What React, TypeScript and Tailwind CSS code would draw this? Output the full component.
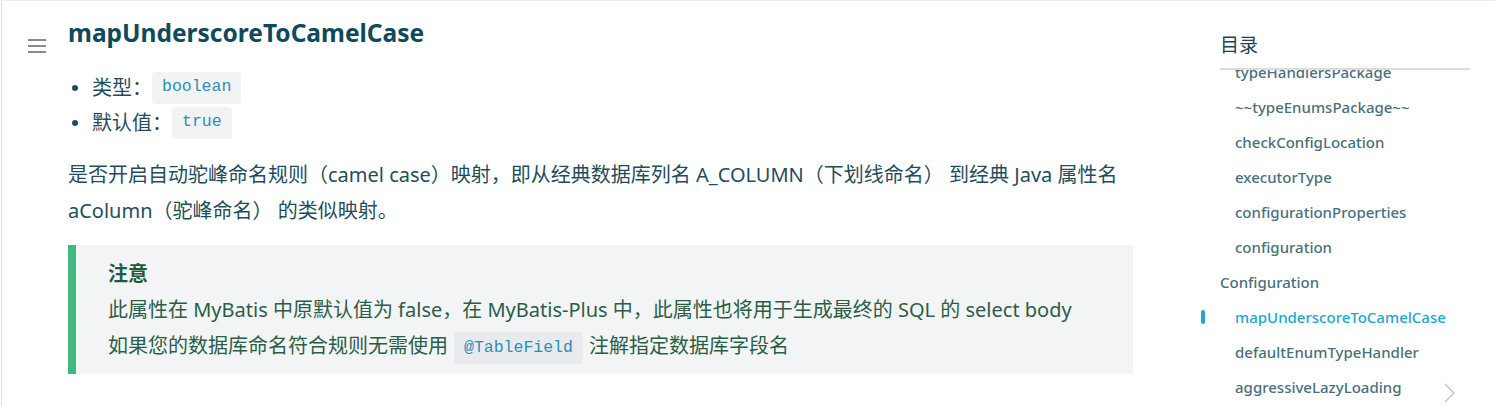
import React from "react";

const tocItems = [
  { label: "typeHandlersPackage", level: 2 },
  { label: "~~typeEnumsPackage~~", level: 2 },
  { label: "checkConfigLocation", level: 2 },
  { label: "executorType", level: 2 },
  { label: "configurationProperties", level: 2 },
  { label: "configuration", level: 2 },
  { label: "Configuration", level: 1 },
  { label: "mapUnderscoreToCamelCase", level: 2, active: true },
  { label: "defaultEnumTypeHandler", level: 2 },
  { label: "aggressiveLazyLoading", level: 2 },
];

const Code: React.FC<{ children: React.ReactNode; dark?: boolean }> = ({
  children,
  dark,
}) => (
  <code
    className={`inline-flex h-[32px] items-center rounded-[4px] px-[10px] text-[16.5px] text-[#2a8fba] font-['Liberation_Mono',monospace] ${
      dark ? "bg-[#e8eaed]" : "bg-[#f2f3f4]"
    }`}
  >
    {children}
  </code>
);

export default function App() {
  return (
    <div className="relative flex h-[406px] w-full overflow-hidden border-t border-[#eee] bg-white font-['Noto_Sans','Noto_Sans_CJK_SC',sans-serif] text-[#1f4d5c]">
      <div className="ml-px w-px shrink-0 bg-[#ddd]" />

      {/* sidebar toggle */}
      <div className="w-[66px] shrink-0 pl-[26px] pt-[38px]">
        <div className="flex w-[18px] flex-col gap-[4px]">
          <span className="h-[2px] bg-[#8a8a8a]" />
          <span className="h-[2px] bg-[#8a8a8a]" />
          <span className="h-[2px] bg-[#8a8a8a]" />
        </div>
      </div>

      {/* main content */}
      <main className="w-[1065px] shrink-0 pt-[16px]">
        <h1 className="text-[24.5px] font-bold leading-[32px] text-[#0f4a5b]">
          mapUnderscoreToCamelCase
        </h1>

        <ul className="mt-[21px] pl-[24px]">
          <li className="relative flex h-[35px] items-center text-[20px]">
            <span className="absolute left-[-20px] top-[15px] h-[6px] w-[6px] rounded-full bg-[#1f4d5c]" />
            <span>类型：</span>
            <Code>boolean</Code>
          </li>
          <li className="relative flex h-[35px] items-center text-[20px]">
            <span className="absolute left-[-20px] top-[15px] h-[6px] w-[6px] rounded-full bg-[#1f4d5c]" />
            <span>默认值：</span>
            <Code>true</Code>
          </li>
        </ul>

        <p className="mt-[17px] whitespace-nowrap text-[20px] leading-[36px]">
          是否开启自动驼峰命名规则（camel case）映射，即从经典数据库列名 A_COLUMN（下划线命名） 到经典 Java 属性名
          <br />
          aColumn（驼峰命名） 的类似映射。
        </p>

        <div className="mt-[16px] flex border-l-[8px] border-[#42b883] bg-[#f3f4f5] pb-[10px] pl-[32px] pt-[16px] text-[#2b5e47]">
          <div>
            <p className="text-[20px] font-bold leading-[26px] text-[#1f5b3e]">注意</p>
            <div className="mt-[5px] whitespace-nowrap text-[20px] leading-[35px]">
              <p>
                此属性在 MyBatis 中原默认值为 false，在 MyBatis-Plus 中，此属性也将用于生成最终的 SQL 的 select body
              </p>
              <p className="flex items-center">
                如果您的数据库命名符合规则无需使用
                <span className="mx-[6px]">
                  <Code dark>@TableField</Code>
                </span>
                注解指定数据库字段名
              </p>
            </div>
          </div>
        </div>
      </main>

      {/* table of contents */}
      <aside className="ml-[67px] w-[270px] shrink-0 pt-[29px]">
        <div className="ml-[20px] border-b-2 border-[#dcdcdc] pb-[8px] text-[19px] leading-[30px] text-[#1c4553]">
          目录
        </div>
        <div className="relative h-[340px] overflow-hidden">
          <ul className="-mt-[15px]">
            {tocItems.map((item) => (
              <li
                key={item.label}
                className={`relative flex h-[35px] items-center text-[15px] font-medium ${
                  item.level === 1 ? "pl-[20px]" : "pl-[35px]"
                } ${item.active ? "text-[#22a6cf]" : "text-[#4a6f7e]"}`}
              >
                {item.active && (
                  <span className="absolute left-[1px] top-[10px] h-[14px] w-[4px] rounded-full bg-[#22a6cf]" />
                )}
                {item.label}
              </li>
            ))}
          </ul>
          <svg
            className="absolute left-[242px] top-[312px]"
            width="16"
            height="22"
            viewBox="0 0 16 22"
            fill="none"
            stroke="#c8c8c8"
            strokeWidth="1.6"
          >
            <path d="M3 2l9 9-9 9" />
          </svg>
        </div>
      </aside>
    </div>
  );
}
